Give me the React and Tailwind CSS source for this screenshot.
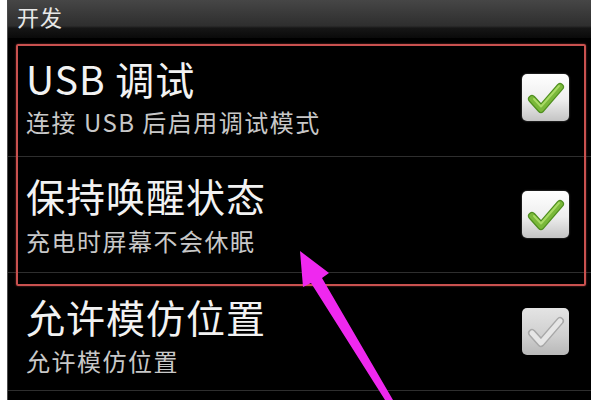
import React from "react";

function CheckBox({ disabled }) {
  return (
    <div
      className={
        "w-[47px] h-[47px] rounded-[5px] shrink-0 flex items-center justify-center " +
        (disabled
          ? "bg-[linear-gradient(#e4e4e4,#cfcfcf_60%,#b8b8b8)]"
          : "bg-[linear-gradient(#ffffff,#eeeeee_55%,#c4c4c4)] shadow-[0_0_2px_rgba(255,255,255,0.4)]")
      }
    >
      <svg width="47" height="47" viewBox="0 0 47 47">
        {disabled ? (
          <>
            <polyline points="10,25 19,35 38,13" fill="none" stroke="#a8a8a8" strokeWidth="8" strokeLinecap="round" strokeLinejoin="round" />
            <polyline points="10,25 19,35 38,13" fill="none" stroke="#e6e6e6" strokeWidth="5" strokeLinecap="round" strokeLinejoin="round" />
          </>
        ) : (
          <>
            <polyline points="10,25 19,35 38,13" fill="none" stroke="#4f8f1f" strokeWidth="8" strokeLinecap="round" strokeLinejoin="round" />
            <polyline points="10,25 19,35 38,13" fill="none" stroke="#7ab83a" strokeWidth="5.5" strokeLinecap="round" strokeLinejoin="round" />
            <polyline points="12,25 19,32.5 37,12" fill="none" stroke="#a8da64" strokeWidth="2" strokeLinecap="round" strokeLinejoin="round" />
          </>
        )}
      </svg>
    </div>
  );
}

function Row({ title, sub, h, pt, gap, disabled }) {
  return (
    <div className={"flex items-center pl-[18px] pr-[22px] " + h}>
      <div className={"flex-1 flex flex-col self-stretch " + pt}>
        <div className="text-[39px] leading-[39px] tracking-[1px] text-[#f2f2f2]">{title}</div>
        <div className={"text-[24px] leading-[24px] tracking-[1.5px] text-[#c8c8c8] " + gap}>{sub}</div>
      </div>
      <CheckBox disabled={disabled} />
    </div>
  );
}

export default function App() {
  return (
    <div
      className="w-[600px] h-[400px] bg-white flex pl-[7px] pr-[9px] overflow-hidden relative"
      style={{ fontFamily: '"Noto Sans CJK SC", "Noto Sans", sans-serif' }}
    >
      <div className="flex-1 bg-black flex flex-col border-l border-[#4a4a4a] relative">
        <div className="h-[38px] shrink-0 pl-[9px] pt-[5px] bg-[linear-gradient(#464646,#2e2e2e_68%,#161616_74%,#0a0a0a)]">
          <span className="text-[22px] leading-[22px] tracking-[1px] text-[#e8e8e8]">开发</span>
        </div>
        <Row title="USB 调试" sub="连接 USB 后启用调试模式" h="h-[118px]" pt="pt-[21px]" gap="mt-[12px]" />
        <div className="h-px bg-[#2e2e2e]" />
        <Row title="保持唤醒状态" sub="充电时屏幕不会休眠" h="h-[115px]" pt="pt-[19px]" gap="mt-[14px]" />
        <div className="h-px bg-[#2e2e2e]" />
        <Row title="允许模仿位置" sub="允许模仿位置" h="h-[117px]" pt="pt-[24px]" gap="mt-[13px]" disabled />
        <div className="h-px bg-[#2e2e2e]" />

        <div className="absolute left-[8px] right-[5px] top-[44px] h-[242px] border-[2.5px] border-[#c9514f] rounded-[2px] shadow-[0_0_2px_rgba(220,90,90,0.6)] pointer-events-none" />
      </div>

      <svg className="absolute inset-0 pointer-events-none" width="600" height="400" viewBox="0 0 600 400">
        <polygon
          points="300,251 329,273 322,278 393,400 385,400 311,283 303,287"
          fill="#ef28ef"
        />
      </svg>
    </div>
  );
}
